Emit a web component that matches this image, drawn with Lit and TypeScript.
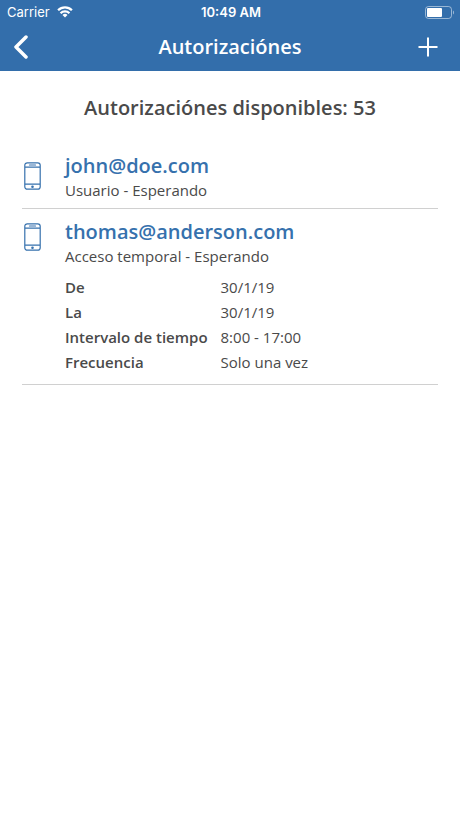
import { LitElement, html, css, svg, nothing } from "lit";
import { customElement, property } from "lit/decorators.js";
import { classMap } from "lit/directives/class-map.js";

interface Detail {
  label: string;
  value: string;
}

interface Authorization {
  email: string;
  summary: string;
  details: Detail[];
}

const AUTHORIZATIONS: Authorization[] = [
  { email: "john@doe.com", summary: "Usuario - Esperando", details: [] },
  {
    email: "thomas@anderson.com",
    summary: "Acceso temporal - Esperando",
    details: [
      { label: "De", value: "30/1/19" },
      { label: "La", value: "30/1/19" },
      { label: "Intervalo de tiempo", value: "8:00 - 17:00" },
      { label: "Frecuencia", value: "Solo una vez" },
    ],
  },
];

const wifiIcon = html`<svg width="16" height="12" viewBox="0 0 16 12" aria-hidden="true">
  ${svg`<g fill="none" stroke="#fff" stroke-width="2.3">
    <path d="M1.1 4.3a9.8 9.8 0 0 1 13.8 0" />
    <path d="M3.6 7.2a6.2 6.2 0 0 1 8.8 0" />
  </g>
  <path d="M8 11.6 5.5 9.1a3.5 3.5 0 0 1 5 0z" fill="#fff" />`}
</svg>`;

const batteryIcon = html`<svg width="30" height="13" viewBox="0 0 30 13" aria-hidden="true">
  ${svg`<rect x="0.5" y="0.5" width="26" height="12" rx="3" fill="none" stroke="#fff" stroke-opacity="0.5" />
  <rect x="2" y="2" width="15" height="9" rx="1" fill="#fff" />
  <path d="M28 4.5c1.4.5 1.4 3.5 0 4z" fill="#fff" fill-opacity="0.5" />`}
</svg>`;

const backIcon = html`<svg width="14" height="24" viewBox="0 0 14 24" aria-hidden="true">
  ${svg`<path d="M12 2 2 12l10 10" fill="none" stroke="#fff" stroke-width="3.5" stroke-linecap="round" stroke-linejoin="round" />`}
</svg>`;

const plusIcon = html`<svg width="20" height="20" viewBox="0 0 20 20" aria-hidden="true">
  ${svg`<path d="M10 0.5v19M0.5 10h19" fill="none" stroke="#fff" stroke-width="2" />`}
</svg>`;

const phoneIcon = html`<svg width="17" height="28" viewBox="0 0 17 28" aria-hidden="true">
  ${svg`<g fill="none" stroke="#3671ad" stroke-width="1.2">
    <rect x="0.8" y="0.8" width="15.4" height="26.4" rx="2.5" />
    <path d="M1 5.2h15M1 22.2h15" />
    <path d="M5.5 3h6" stroke-linecap="round" />
  </g>
  <circle cx="8.5" cy="24.7" r="1.3" fill="#3671ad" />`}
</svg>`;

@customElement("status-bar")
export class StatusBar extends LitElement {
  static styles = css`
    :host {
      display: grid;
      grid-template-columns: 1fr auto 1fr;
      align-items: center;
      height: 24px;
      padding: 0 5px 0 7px;
      font-family: Inter, "Liberation Sans", sans-serif;
      font-size: 13px;
      color: #fff;
    }
    .carrier {
      display: flex;
      align-items: center;
      gap: 7px;
    }
    .time {
      font-weight: 600;
    }
    .battery {
      display: flex;
      justify-content: flex-end;
    }
    svg {
      display: block;
    }
  `;

  render() {
    return html`
      <span class="carrier">Carrier ${wifiIcon}</span>
      <span class="time">10:49 AM</span>
      <span class="battery">${batteryIcon}</span>
    `;
  }
}

@customElement("authorization-item")
export class AuthorizationItem extends LitElement {
  @property({ attribute: false }) item!: Authorization;

  static styles = css`
    :host {
      display: block;
      border-bottom: 1px solid #d0d0d0;
    }
    .row {
      display: flex;
      align-items: center;
      gap: 24px;
      padding-left: 2px;
    }
    .detailed {
      align-items: flex-start;
    }
    .icon {
      flex: none;
    }
    .detailed .icon {
      padding-top: 14px;
    }
    svg {
      display: block;
    }
    .body {
      flex: 1;
      min-width: 0;
      padding: 9px 0 8px;
    }
    .email {
      display: block;
      font-size: 20px;
      line-height: 28px;
      font-weight: 600;
      color: #3671ad;
      text-decoration: none;
    }
    p {
      margin: 0;
      font-size: 15px;
      line-height: 20px;
    }
    table {
      margin: 9px 0 1px;
      border-collapse: collapse;
      font-size: 15px;
      line-height: 25px;
    }
    th,
    td {
      padding: 0;
      text-align: left;
      font-weight: 400;
      white-space: nowrap;
    }
    th {
      padding-right: 13px;
      font-weight: 600;
    }
  `;

  render() {
    const { email, summary, details } = this.item;
    return html`
      <div class=${classMap({ row: true, detailed: details.length > 0 })}>
        <div class="icon">${phoneIcon}</div>
        <div class="body">
          <a class="email" href="mailto:${email}">${email}</a>
          <p>${summary}</p>
          ${details.length
            ? html`<table>
                <tbody>
                  ${details.map(
                    (d) => html`<tr><th scope="row">${d.label}</th><td>${d.value}</td></tr>`
                  )}
                </tbody>
              </table>`
            : nothing}
        </div>
      </div>
    `;
  }
}

@customElement("app-root")
export class AppRoot extends LitElement {
  static styles = css`
    :host {
      display: block;
      min-height: 100vh;
      background: #fff;
      color: #4a4a4a;
      font-family: "Open Sans", "Noto Sans", sans-serif;
    }
    header {
      padding-bottom: 2px;
      background: #336eab;
      color: #fff;
    }
    nav {
      display: grid;
      grid-template-columns: 1fr auto 1fr;
      align-items: center;
      height: 45px;
      padding: 0 14px;
    }
    h1,
    h2 {
      margin: 0;
      font-size: 20px;
      line-height: 28px;
      font-weight: 600;
      text-align: center;
    }
    button {
      padding: 0;
      border: 0;
      background: none;
      cursor: pointer;
    }
    .add {
      justify-self: end;
      padding-right: 8px;
    }
    .back {
      justify-self: start;
    }
    svg {
      display: block;
    }
    main {
      padding: 23px 22px;
    }
    h2 {
      margin-bottom: 21px;
    }
  `;

  render() {
    return html`
      <header>
        <status-bar></status-bar>
        <nav>
          <button class="back" type="button" aria-label="Atrás">${backIcon}</button>
          <h1>Autorizaciónes</h1>
          <button class="add" type="button" aria-label="Añadir">${plusIcon}</button>
        </nav>
      </header>
      <main>
        <h2>Autorizaciónes disponibles: 53</h2>
        ${AUTHORIZATIONS.map(
          (item) => html`<authorization-item .item=${item}></authorization-item>`
        )}
      </main>
    `;
  }
}
